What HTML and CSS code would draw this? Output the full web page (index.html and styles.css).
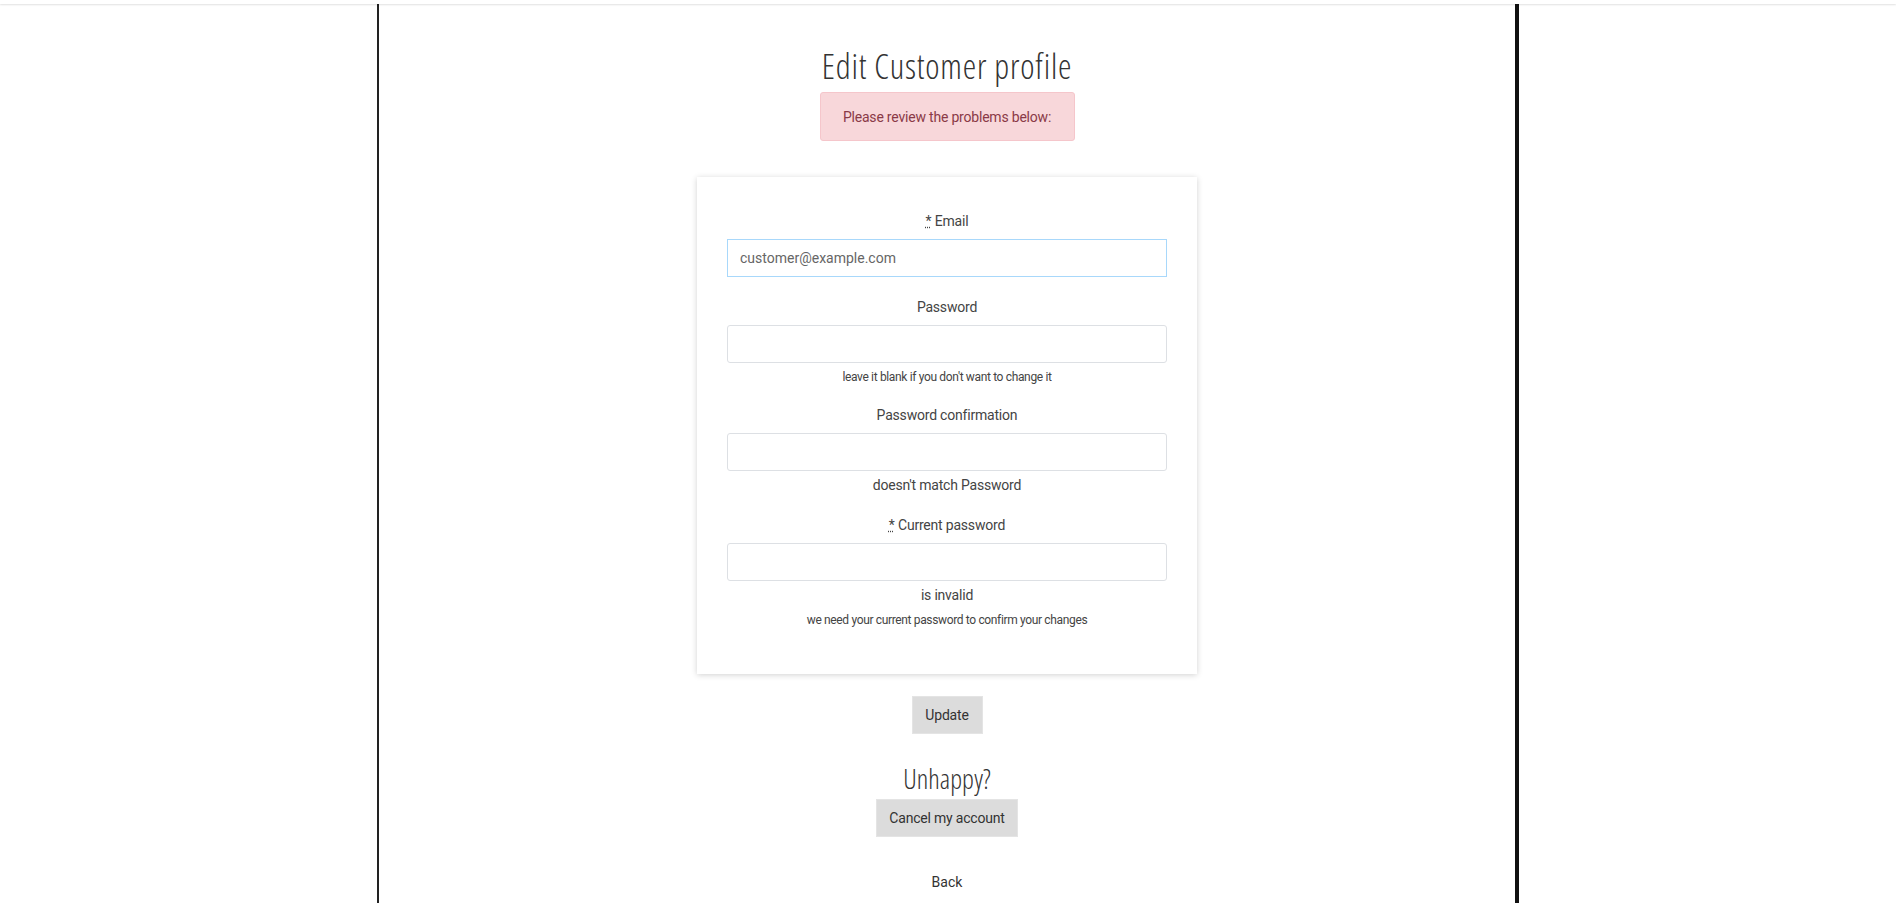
FILE: index.html
```html
<!DOCTYPE html>
<html>
<head>
<meta charset="utf-8">
<link rel="stylesheet" href="styles.css">
</head>
<body>
<div class="topbar"></div>
<main class="page">
  <h1 class="title">Edit Customer profile</h1>
  <div class="alert">Please review the problems below:</div>
  <form class="card">
    <div class="field">
      <label class="label"><abbr title="required">*</abbr> Email</label>
      <input class="input focused" type="text" value="customer@example.com">
    </div>
    <div class="field">
      <label class="label">Password</label>
      <input class="input" type="password">
      <div class="hint">leave it blank if you don't want to change it</div>
    </div>
    <div class="field">
      <label class="label">Password confirmation</label>
      <input class="input" type="password">
      <div class="error">doesn't match Password</div>
    </div>
    <div class="field last">
      <label class="label"><abbr title="required">*</abbr> Current password</label>
      <input class="input" type="password">
      <div class="error">is invalid</div>
      <div class="hint">we need your current password to confirm your changes</div>
    </div>
  </form>
  <button class="btn update" type="button">Update</button>
  <h2 class="subtitle">Unhappy?</h2>
  <button class="btn cancel" type="button">Cancel my account</button>
  <a class="back" href="#">Back</a>
</main>
</body>
</html>
```
FILE: styles.css
```css
html, body {
  margin: 0;
  padding: 0;
  background: #fff;
}
body {
  font-family: Roboto, "Liberation Sans", sans-serif;
  color: #333;
  overflow: hidden;
}
.topbar {
  height: 4px;
  box-shadow: 0 1px 2px rgba(0,0,0,0.12);
  position: relative;
  z-index: 1;
}
.page {
  width: 1142px;
  margin: 0 auto;
  border-left: 2px solid #222;
  border-right: 4px solid #111;
  min-height: 899px;
  display: flex;
  flex-direction: column;
  align-items: center;
  box-sizing: border-box;
}
.title {
  font-family: "Open Sans", sans-serif;
  font-weight: 300;
  font-stretch: 75%;
  font-size: 34px;
  letter-spacing: 0.8px;
  color: #333;
  margin: 40px 0 0;
  line-height: 44px;
}
.alert {
  margin-top: 4px;
  width: 255px;
  height: 49px;
  box-sizing: border-box;
  background: #f8d7da;
  border: 1px solid #f5c6cb;
  border-radius: 3px;
  color: #8a3a47;
  font-size: 14px;
  display: flex;
  align-items: center;
  justify-content: center;
  letter-spacing: -0.2px;
}
.card {
  margin-top: 36px;
  width: 500px;
  box-sizing: border-box;
  padding: 34px 30px 46px;
  background: #fff;
  box-shadow: 0 1px 6px rgba(0,0,0,0.18);
  display: flex;
  flex-direction: column;
  align-items: center;
}
.field {
  width: 440px;
  display: flex;
  flex-direction: column;
  align-items: center;
  margin-bottom: 20px;
}
.field.last { margin-bottom: 0; }
.label {
  font-size: 14px;
  color: #444;
  line-height: 20px;
  margin-bottom: 8px;
  letter-spacing: -0.2px;
}
.label abbr {
  text-decoration: underline dotted;
  border: none;
  cursor: help;
}
.input {
  width: 440px;
  height: 38px;
  box-sizing: border-box;
  border: 1px solid #dde0e4;
  border-radius: 3px;
  padding: 0 12px;
  font-family: Roboto, sans-serif;
  font-size: 14px;
  color: #666;
  outline: none;
  background: #fff;
}
.input.focused {
  border: 1px solid #a8d8fb;
  border-radius: 0;
}
.hint {
  font-size: 12px;
  color: #444;
  line-height: 16px;
  margin-top: 6px;
  letter-spacing: -0.35px;
}
.error {
  font-size: 14px;
  color: #444;
  line-height: 20px;
  margin-top: 4px;
  letter-spacing: -0.2px;
}
.error + .hint { margin-top: 7px; }
.btn {
  height: 38px;
  border: 1px solid #e4e4e4;
  background: #dcdcdc;
  color: #333;
  font-family: Roboto, sans-serif;
  font-size: 14px;
  padding: 0 12px;
  letter-spacing: -0.2px;
}
.update { margin-top: 22px; width: 71px; }
.subtitle {
  font-family: "Open Sans", sans-serif;
  font-weight: 300;
  font-stretch: 75%;
  font-size: 27px;
  letter-spacing: 0;
  color: #333;
  margin: 27px 0 0;
  line-height: 36px;
}
.cancel { margin-top: 2px; width: 142px; }
.back {
  margin-top: 37px;
  font-size: 14px;
  line-height: 17px;
  color: #333;
  text-decoration: none;
}
```
